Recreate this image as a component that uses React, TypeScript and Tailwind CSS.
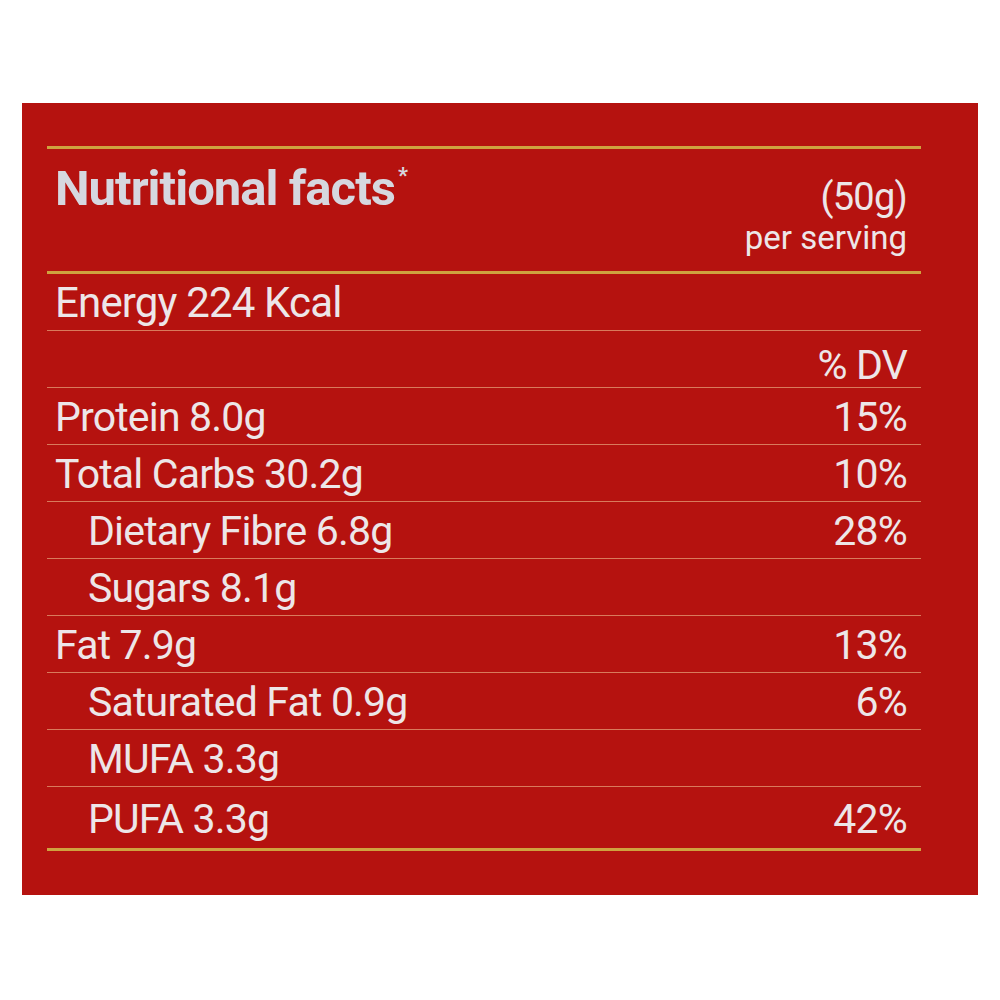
const rows = [
  { label: "% DV", value: "", indent: false, right: true },
  { label: "Protein 8.0g", value: "15%", indent: false },
  { label: "Total Carbs 30.2g", value: "10%", indent: false },
  { label: "Dietary Fibre 6.8g", value: "28%", indent: true },
  { label: "Sugars 8.1g", value: "", indent: true },
  { label: "Fat 7.9g", value: "13%", indent: false },
  { label: "Saturated Fat 0.9g", value: "6%", indent: true },
  { label: "MUFA 3.3g", value: "", indent: true },
  { label: "PUFA 3.3g", value: "42%", indent: true },
];

export default function App() {
  return (
    <div className="min-h-screen bg-white pt-[103px] pl-[22px] font-['Roboto',sans-serif]">
      <div className="w-[956px] h-[792px] bg-[#b5120f] pt-[43px] pl-[25px] pr-[57px] text-[#ede6e8]">
        <div className="h-[3px] bg-[#cfa23f]" />

        {/* header */}
        <div className="h-[122px] flex justify-between pl-[8px] pr-[14px]">
          <div className="pt-[15px] flex items-start text-[49px] font-bold leading-none tracking-[-0.02em] text-[#d6d7df]">
            <span>Nutritional facts</span>
            <span className="ml-[3px] mt-[1px] text-[22px]">*</span>
          </div>
          <div className="pt-[29px] flex flex-col items-end">
            <div className="text-[38px] leading-none tracking-[-0.02em]">(50g)</div>
            <div className="mt-[5px] text-[33px] leading-none">per serving</div>
          </div>
        </div>

        <div className="h-[3px] bg-[#cfa23f]" />

        <div className="h-[57px] flex items-end pl-[8px] pb-[6px] border-b border-[#d97a5c] text-[42px] leading-none tracking-[-0.02em]">
          Energy 224 Kcal
        </div>

        {rows.map((r, i) => {
          const last = i === rows.length - 1;
          return (
            <div
              key={r.label}
              className={`flex items-end justify-between pr-[14px] text-[41px] leading-none tracking-[-0.02em] ${
                last ? "h-[61px] pb-[8px]" : "h-[57px] border-b border-[#d97a5c]"
              } ${r.right ? "pb-[1px]" : last ? "" : "pb-[6px]"} ${r.indent ? "pl-[41px]" : "pl-[8px]"}`}
            >
              {r.right ? (
                <>
                  <span />
                  <span>{r.label}</span>
                </>
              ) : (
                <>
                  <span>{r.label}</span>
                  <span>{r.value}</span>
                </>
              )}
            </div>
          );
        })}

        <div className="h-[3px] bg-[#cfa23f]" />
      </div>
    </div>
  );
}
